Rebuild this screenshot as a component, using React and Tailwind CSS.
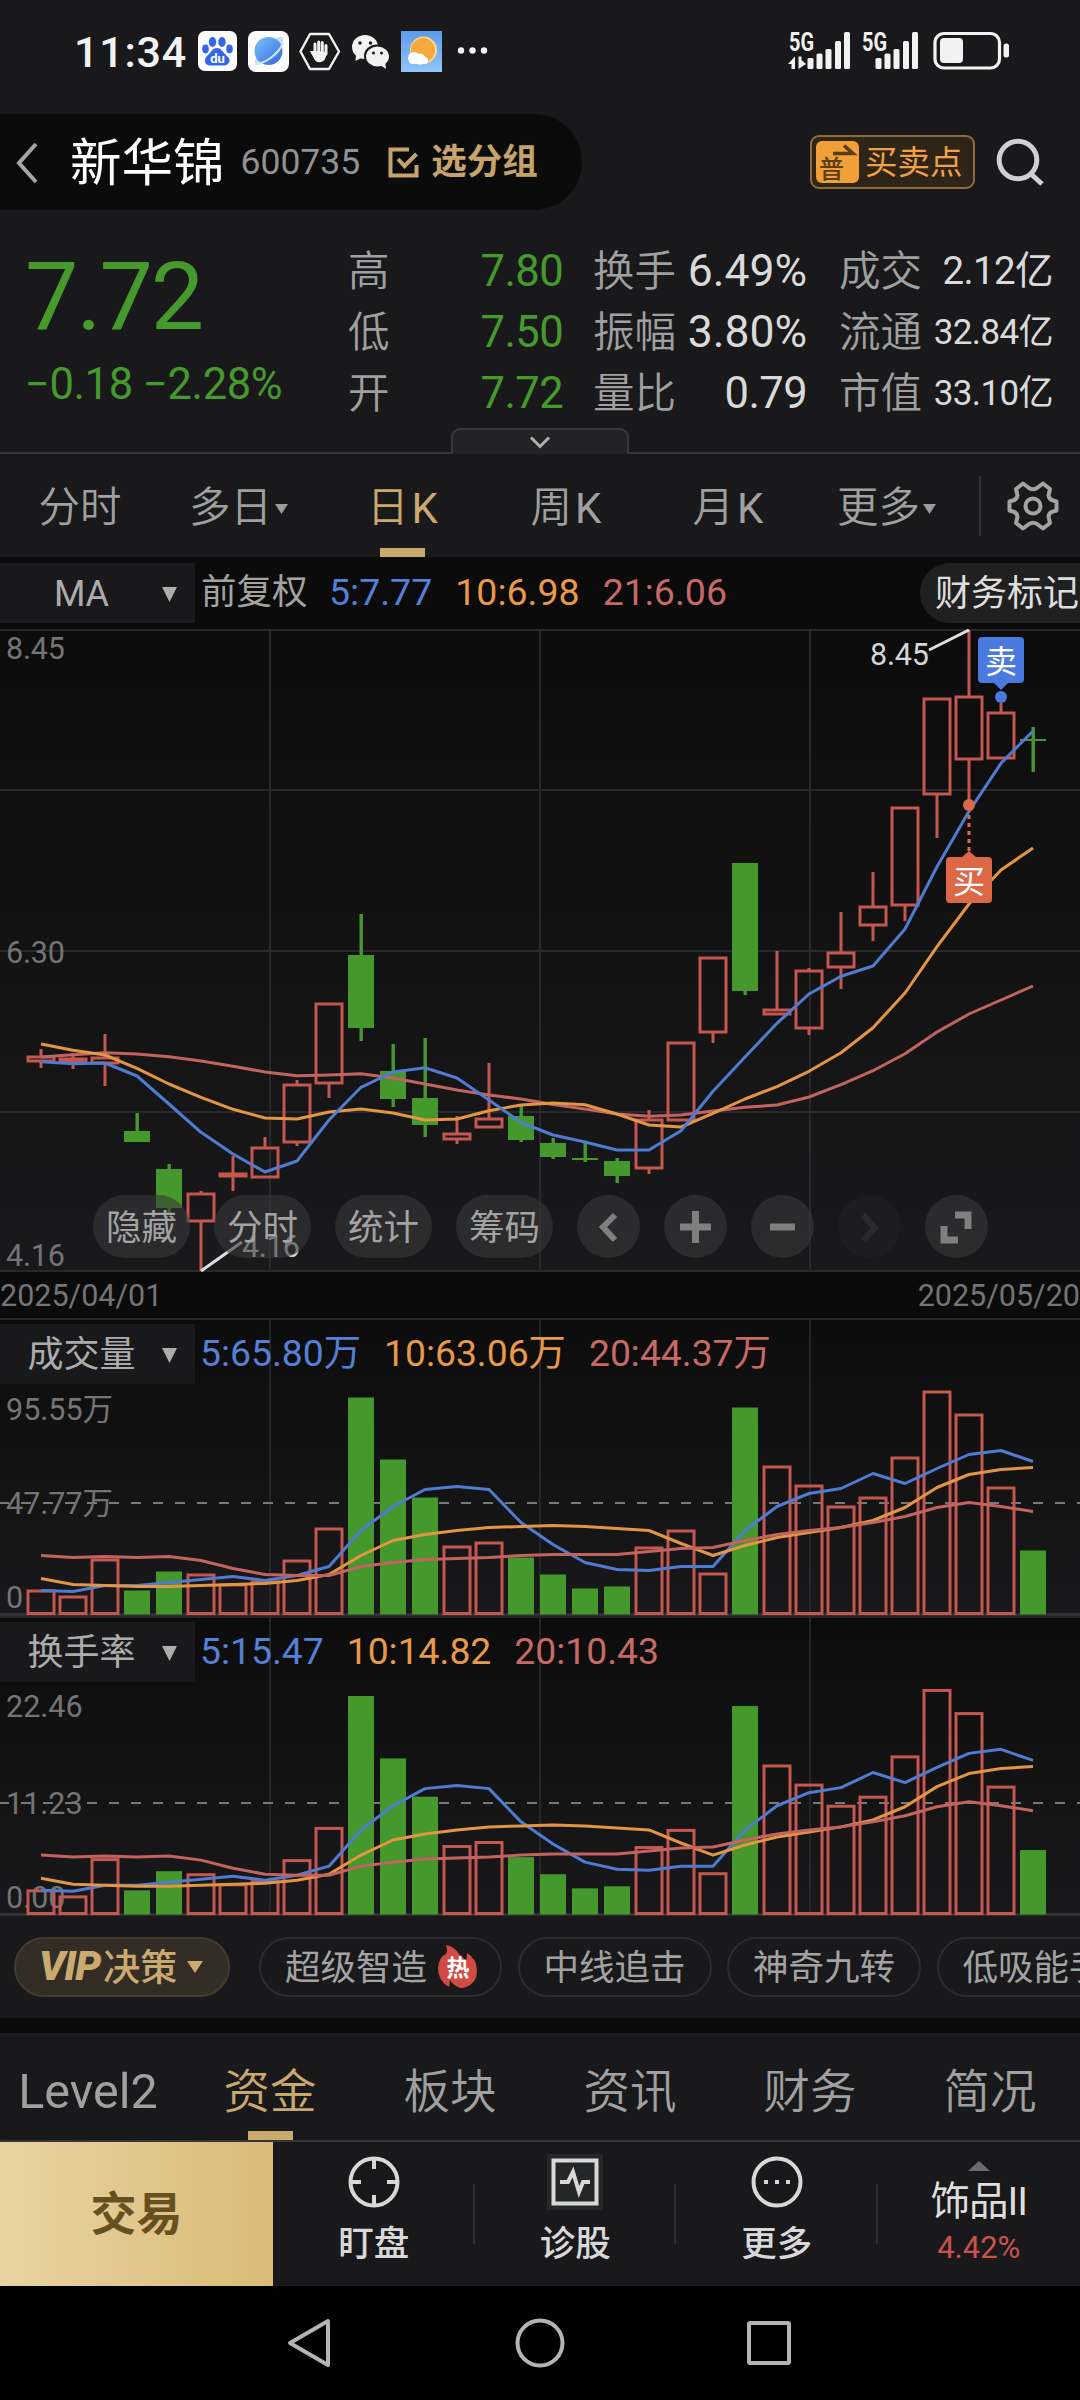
// src/App.jsx
import React from 'react';

const RED = '#c4574f';
const GREEN = '#44982c';
const BLUE = '#4f7bd0';
const ORANGE = '#e39544';
const ROSE = '#c26360';

const x = (i) => 41 + i * 32;

// [up, wick top, body top, body bottom, wick bottom]
const candles = [
  [1, 1049, 1057, 1061, 1068], [1, 1053, 1059, 1062, 1069], [1, 1034, 1058, 1063, 1086], [0, 1113, 1131, 1142, 1142],
  [0, 1164, 1169, 1208, 1214], [1, 1191, 1194, 1221, 1271], [1, 1156, 1174, 1176, 1191], [1, 1137, 1148, 1177, 1177],
  [1, 1080, 1085, 1142, 1146], [1, 1004, 1004, 1083, 1098], [0, 914, 955, 1028, 1041], [0, 1044, 1071, 1099, 1107],
  [0, 1038, 1098, 1125, 1137], [1, 1116, 1134, 1139, 1144], [1, 1063, 1119, 1127, 1127], [0, 1106, 1116, 1140, 1142],
  [0, 1138, 1143, 1157, 1159], [0, 1143, 1158, 1160, 1162], [0, 1158, 1161, 1176, 1183], [1, 1110, 1120, 1168, 1174],
  [1, 1043, 1043, 1120, 1120], [1, 958, 958, 1032, 1043], [0, 863, 863, 991, 995], [1, 951, 1010, 1014, 1014],
  [1, 968, 971, 1028, 1035], [1, 912, 953, 967, 989], [1, 872, 907, 925, 941], [1, 808, 808, 905, 921],
  [1, 699, 699, 794, 838], [1, 630, 697, 759, 803], [1, 703, 713, 758, 758], [0, 727, 739, 741, 772],
];

const ma5 = [1061.7, 1063.7, 1063, 1076, 1104, 1132.3, 1154, 1172, 1161, 1120, 1087.3, 1072, 1067.7, 1078, 1100, 1122.5, 1135, 1142, 1150, 1150, 1130.7, 1091.3, 1057, 1023.3, 994, 976.3, 966, 929, 866.7, 811.3, 763.3, 731];
const ma10 = [1044, 1050.3, 1055, 1068.3, 1084, 1097.3, 1109.3, 1118, 1119, 1112, 1109, 1113, 1120, 1119, 1110.7, 1105, 1103, 1104.7, 1114, 1125, 1127, 1113.3, 1099, 1086.7, 1071.3, 1052.7, 1027.7, 993, 946.7, 904, 870, 848];
const ma21 = [1057, 1054.7, 1052.7, 1054, 1056.7, 1061, 1066.3, 1072, 1075.7, 1075, 1073.7, 1078, 1084, 1090, 1095, 1099, 1104.5, 1109, 1114, 1116.3, 1115, 1111, 1107.3, 1105, 1097, 1084.7, 1070.7, 1053.7, 1032, 1014, 1000, 986];

// bar heights above the base line
const bars = [24, 18, 55, 24, 43, 40, 30, 33, 54, 86, 217, 155, 117, 68, 72, 57, 40, 26, 28, 67, 84, 41, 207, 148, 129, 108, 117, 157, 223, 200, 127, 64];
const avg5 = [24, 23, 29, 29, 32, 35, 38, 34, 39, 48, 84, 108, 125, 128, 125, 92, 70, 52, 45, 44, 48, 48, 84, 108, 121, 126, 141, 131, 146, 160, 164, 153];
const avg10 = [36, 30, 29, 28, 28, 29, 30, 31, 34, 40, 59, 74, 80, 84, 87, 88, 89, 88, 86, 84, 71, 59, 69, 77, 82, 87, 94, 107, 127, 140, 145, 147];
const avg20 = [59, 57, 58, 57, 58, 54, 46, 40, 39, 39, 48, 52, 55, 56, 57, 59, 60, 60, 60, 63, 66, 67, 74, 80, 84, 87, 92, 98, 107, 112, 108, 103];

const points = (list, fn) => list.map((v, i) => `${x(i)},${fn(v)}`).join(' ');

const Line = ({ list, fn, color }) => (
  <polyline points={points(list, fn)} fill="none" stroke={color} strokeWidth="3" strokeLinejoin="round" />
);

const PanelBg = ({ id, height }) => (
  <>
    <defs>
      <linearGradient id={id} x1="0" y1="0" x2="0" y2="1">
        <stop offset="0" stopColor="#0c0c0c" />
        <stop offset="1" stopColor="#19191b" />
      </linearGradient>
    </defs>
    <rect width="1080" height={height} fill={`url(#${id})`} />
  </>
);

const StatusBar = () => (
  <div className="flex h-[114px] items-start justify-between pt-[30px] pl-[74px] pr-[70px]">
    <div className="flex h-[42px] items-center">
      <span className="w-[124px] pt-[2px] text-[43px] leading-none font-medium tracking-[0.8px] text-[#f2f2f2]">11:34</span>
      <svg width="292" height="42" viewBox="0 0 292 42">
        <rect x="0" y="1" width="39" height="40" rx="7" fill="#fff" />
        <g fill="#3367e8">
          <ellipse cx="14.500" cy="12" rx="3.700" ry="5" />
          <ellipse cx="24" cy="12" rx="3.700" ry="5" />
          <ellipse cx="7.500" cy="19" rx="3.300" ry="4.400" />
          <ellipse cx="31.500" cy="19" rx="3.300" ry="4.400" />
          <path d="M19 18 C24 18 25 23 29 26 C34 30 31 35.500 26 35.500 L12 35.500 C7 35.500 5 30 9 26 C13 23 14 18 19 18Z" />
        </g>
        <text x="19.500" y="33" fill="#fff" fontSize="13" fontWeight="700" textAnchor="middle">du</text>
        <defs>
          <linearGradient id="planet" x1="0" y1="0" x2="1" y2="1">
            <stop offset="0" stopColor="#7fc4f8" />
            <stop offset="1" stopColor="#2f67e0" />
          </linearGradient>
          <linearGradient id="sky" x1="0" y1="0" x2="0" y2="1">
            <stop offset="0" stopColor="#5d9cec" />
            <stop offset="1" stopColor="#93c4f8" />
          </linearGradient>
        </defs>
        <rect x="50" y="1" width="41" height="41" rx="8" fill="#fff" />
        <ellipse cx="71" cy="21" rx="19" ry="6" transform="rotate(-45 71 21)" fill="#c3dcfa" />
        <circle cx="70.500" cy="21" r="14" fill="url(#planet)" />
        <path d="M57 34 C66 34 80 25 85 13" stroke="#d4e7fc" strokeWidth="2" fill="none" />
        <path d="M112 4 H131 L141 21.500 L131 39 H112 L102.500 21.500Z" fill="none" stroke="#f2f2f2" strokeWidth="2.400" strokeLinejoin="round" />
        <g stroke="#f2f2f2" strokeWidth="3" strokeLinecap="round" fill="#f2f2f2">
          <path d="M117 23 V14 M120.700 22 V12 M124.300 22 V12.500 M128 24 V15.500" />
          <path d="M113.500 22 L118 30 Q122 33 126 29 L128 23 L117 22Z" strokeWidth="2" />
        </g>
        <g fill="#f2f2f2">
          <ellipse cx="167" cy="17" rx="13" ry="12" />
          <path d="M158 25 L157.500 31 L165 27Z" />
        </g>
        <ellipse cx="179" cy="26" rx="13" ry="11.500" fill="#19191b" />
        <ellipse cx="179.500" cy="26.500" rx="11.500" ry="10" fill="#f2f2f2" />
        <path d="M182 35 L188 39 L187 31Z" fill="#f2f2f2" />
        <g fill="#19191b">
          <circle cx="162" cy="13" r="1.700" />
          <circle cx="172.500" cy="13" r="1.700" />
          <circle cx="175.500" cy="23" r="1.500" />
          <circle cx="183.500" cy="23" r="1.500" />
        </g>
        <rect x="203" y="1" width="41" height="41" fill="url(#sky)" />
        <circle cx="225.500" cy="20" r="13.500" fill="#ffd98a" />
        <circle cx="225" cy="20" r="12" fill="#f6a93c" />
        <circle cx="216" cy="28" r="6" fill="#fff" />
        <circle cx="222" cy="29" r="5.500" fill="#fff" />
        <rect x="211" y="27" width="19" height="7" rx="3.500" fill="#fff" />
        <g fill="#f2f2f2">
          <circle cx="263" cy="20.500" r="3.200" />
          <circle cx="274.500" cy="20.500" r="3.200" />
          <circle cx="286" cy="20.500" r="3.200" />
        </g>
      </svg>
    </div>
    <svg className="overflow-visible" width="222" height="42" viewBox="788 30 222 42" fill="#f2f2f2">
      <text x="789" y="50.500" fontSize="25" fontWeight="700" textLength="25" lengthAdjust="spacingAndGlyphs">5G</text>
      <text x="862" y="50.500" fontSize="25" fontWeight="700" textLength="25" lengthAdjust="spacingAndGlyphs">5G</text>
      <path d="M788 64 L795 56.500 V69 H791.500 V64Z M798.500 56.500 H801.500 V60 L806 64 L798.500 69Z" />
      <rect x="807.500" y="58" width="6" height="11" rx="1.500" />
      <rect x="816.500" y="53.500" width="6" height="15.500" rx="1.500" />
      <rect x="825.500" y="49" width="6" height="20" rx="1.500" />
      <rect x="835" y="41" width="6" height="28" rx="1.500" />
      <rect x="844" y="32" width="6" height="37" rx="1.500" />
      <rect x="875.500" y="58" width="6" height="11" rx="1.500" />
      <rect x="884.500" y="53.500" width="6" height="15.500" rx="1.500" />
      <rect x="893.500" y="49" width="6" height="20" rx="1.500" />
      <rect x="903" y="41" width="6" height="28" rx="1.500" />
      <rect x="912" y="32" width="6" height="37" rx="1.500" />
      <rect x="935" y="33.500" width="64.500" height="34.500" rx="9" fill="none" stroke="#f2f2f2" strokeWidth="3.200" />
      <rect x="940" y="38" width="23" height="25" rx="4" />
      <rect x="1003.500" y="43.500" width="5.500" height="14" rx="2.500" />
    </svg>
  </div>
);

const Header = () => (
  <div className="flex h-24 items-center justify-between pr-[36px]">
    <div className="flex h-24 w-[582px] items-center rounded-r-full bg-[#0b0b0b] pl-[14px]">
      <svg width="24" height="44" viewBox="0 0 24 44" fill="none" stroke="#a5a5a5" strokeWidth="4">
        <path d="M22 4 L5 23 L22 42" />
      </svg>
      <span className="ml-[32px] pt-[3px] text-[51.5px] leading-none text-white">新华锦</span>
      <span className="ml-[16px] pt-[2px] text-[35.5px] leading-none text-[#929292]">600735</span>
      <svg className="ml-[28px]" width="31" height="31" viewBox="0 0 31 31" fill="none" stroke="#c4a46c" strokeWidth="4">
        <path d="M21 2.500 H2.500 V28.500 H28.500 V18" />
        <path d="M10 12 L16.500 19 L28.500 7" />
      </svg>
      <span className="ml-[12px] pt-[2px] text-[35.5px] leading-none font-bold text-[#c4a46c]">选分组</span>
    </div>
    <div className="flex items-center gap-[21px]">
      <div className="flex h-[54px] w-[165px] items-center rounded-[9px] border-2 border-[#8f6b3c] bg-[#2e2417] pl-1">
        <svg className="overflow-visible" width="43" height="42" viewBox="0 0 43 42">
          <rect width="43" height="42" rx="6" fill="#f09f39" />
          <path d="M17 12.500 H37 L28 4.500" fill="none" stroke="#5a3d12" strokeWidth="3.500" />
          <text x="3" y="36.500" fontSize="25" fill="#5a3d12" fontWeight="500">普</text>
        </svg>
        <span className="ml-[6px] pt-[2px] text-[32.5px] leading-none text-[#f0a045]">买卖点</span>
      </div>
      <svg width="48" height="50" viewBox="0 0 48 50" fill="none" stroke="#cfd0d1" strokeWidth="5">
        <circle cx="22" cy="23" r="18.800" />
        <path d="M35 37 L46 47" />
      </svg>
    </div>
  </div>
);

const stats = [
  [
    ['高', '7.80'],
    ['低', '7.50'],
    ['开', '7.72'],
  ],
  [
    ['换手', '6.49%'],
    ['振幅', '3.80%'],
    ['量比', '0.79'],
  ],
  [
    ['成交', '2.12亿'],
    ['流通', '32.84亿'],
    ['市值', '33.10亿'],
  ],
];

const colClass = ['ml-0 w-[215px]', 'ml-[30px] w-[214px]', 'ml-[32px] w-[214px]'];
const valueClass = [
  ['text-[43.5px] tracking-[-0.6px] text-[#469a2d]', 'text-[43.5px] tracking-[-0.6px] text-[#469a2d]', 'text-[43.5px] tracking-[-0.6px] text-[#469a2d]'],
  ['text-[44.5px] text-[#dadada]', 'text-[44.5px] text-[#dadada]', 'text-[43.5px] tracking-[-0.6px] text-[#dadada]'],
  ['text-[38.5px] tracking-[-0.6px] text-[#dadada]', 'text-[35px] tracking-[-0.6px] text-[#dadada]', 'text-[35px] tracking-[-0.6px] text-[#dadada]'],
];

const Quote = () => (
  <div className="relative flex h-[244px] border-b-2 border-[#363638]">
    <div className="w-[348px] pl-[25px]">
      <div className="mt-[40px] text-[95px] leading-[94px] tracking-[-2px] text-[#469a2d]">7.72</div>
      <div className="mt-[18px] text-[43.5px] leading-[46px] tracking-[-0.4px] text-[#469a2d]">−0.18 −2.28%</div>
    </div>
    {stats.map((col, c) => (
      <div key={c} className={`pt-[31px] ${colClass[c]}`}>
        {col.map(([label, value], r) => (
          <div key={label} className="flex h-[61px] items-center justify-between leading-none">
            <span className="text-[41.5px] font-[350] text-[#a0a0a0]">{label}</span>
            <span className={valueClass[c][r]}>{value}</span>
          </div>
        ))}
      </div>
    ))}
    <div className="absolute top-[218px] left-[451px] flex h-[26px] w-[178px] items-center justify-center rounded-t-[9px] border-2 border-b-0 border-[#38383a] bg-[#232325]">
      <svg width="22" height="13" viewBox="0 0 22 13" fill="none" stroke="#b0b0b0" strokeWidth="3">
        <path d="M2 1.500 L11 10.500 L20 1.500" />
      </svg>
    </div>
  </div>
);

const periods = [
  ['分时', 'w-[160px]', false],
  ['多日', 'w-[157px]', true],
  ['日K', 'w-[171px]', false],
  ['周K', 'w-[156px]', false],
  ['月K', 'w-[168px]', false],
  ['更多', 'w-[149px]', true],
];

const Periods = () => (
  <div className="flex h-[103px] items-center">
    {periods.map(([name, width, menu]) => (
      <div key={name} className={`relative flex h-full items-center justify-center pt-[6px] text-[41.5px] font-[350] ${width} ${name === '日K' ? 'text-[#c9a96e]' : 'text-[#a0a0a0]'}`}>
        <span>{name.replace('K', '')}</span>
        {name.endsWith('K') && <span className="ml-[3px] text-[42px] font-normal">K</span>}
        {menu && (
          <svg className="ml-[3px]" width="13" height="10" viewBox="0 0 13 10" fill="#9c9c9c">
            <path d="M0 0 H13 L6.500 10Z" />
          </svg>
        )}
        {name === '日K' && <div className="absolute bottom-0 h-[9px] w-[45px] bg-[#c9a96e]" />}
      </div>
    ))}
    <div className="ml-[18px] h-[60px] w-[2px] bg-[#343436]" />
    <svg className="ml-[26px]" width="52" height="52" viewBox="0 0 52 52" fill="none" stroke="#a3a3a3" strokeWidth="4" strokeLinejoin="round">
      <path d="M16 3.500 L22 8 Q26 10.500 30 8 L36 3.500 L43 9 L41.500 15.500 Q42 19.500 46 20.500 L49.500 21.500 V30.500 L46 31.500 Q42 32.500 41.500 36.500 L43 43 L36 48.500 L30 44 Q26 41.500 22 44 L16 48.500 L9 43 L10.500 36.500 Q10 32.500 6 31.500 L2.500 30.500 V21.500 L6 20.500 Q10 19.500 10.500 15.500 L9 9Z" />
      <circle cx="26" cy="26" r="7.500" />
    </svg>
  </div>
);

const Picker = ({ name }) => (
  <div className="relative flex h-[60px] w-[195px] shrink-0 items-center bg-[#19191b] pt-[2px] text-[36px] text-[#acacac]">
    <span className="w-[163px] text-center">{name}</span>
    <svg className="absolute left-[162px]" width="15" height="15" viewBox="0 0 15 15" fill="#acacac">
      <path d="M0 0 H15 L7.500 15Z" />
    </svg>
  </div>
);

const Values = ({ list }) => (
  <>
    <span className="text-[#5580d6]">{list[0]}</span>
    <span className="text-[#e8994a]">{list[1]}</span>
    <span className="text-[#c76966]">{list[2]}</span>
  </>
);

const KLine = () => (
  <div className="relative h-[643px]">
    <svg className="block" width="1080" height="643" viewBox="0 629 1080 643">
      <g transform="translate(0 629)">
        <PanelBg id="bg-k" height="643" />
      </g>
      <path d="M0 630 H1080 M0 790 H1080 M0 951 H1080 M0 1112 H1080 M0 1271 H1080 M270 629 V1272 M540 629 V1272 M810 629 V1272" stroke="#29292b" strokeWidth="2" />
      {candles.map(([up, wt, bt, bb, wb], i) =>
        up ? (
          <g key={i} fill="none" stroke={RED} strokeWidth="3">
            <path d={`M${x(i)} ${wt} V${bt} M${x(i)} ${bb} V${wb}`} />
            <rect x={x(i) - 13} y={bt} width="26" height={bb - bt} />
          </g>
        ) : (
          <g key={i} fill={GREEN}>
            <rect x={x(i) - 1.5} y={wt} width="3.4" height={wb - wt} />
            <rect x={x(i) - 13} y={bt} width="26" height={bb - bt} />
          </g>
        )
      )}
      <Line list={ma21} fn={(v) => v} color={ROSE} />
      <Line list={ma10} fn={(v) => v} color={ORANGE} />
      <Line list={ma5} fn={(v) => v} color={BLUE} />
      <g fontSize="30.500" fill="#747476">
        <text x="6" y="659" textLength="59">8.45</text>
        <text x="6" y="962.500" textLength="59">6.30</text>
        <text x="6" y="1265.500" textLength="59">4.16</text>
      </g>
      <g fontSize="30.500" fill="#d6d6d6">
        <text x="870" y="665" textLength="59">8.45</text>
        <text x="242" y="1257" textLength="58">4.16</text>
      </g>
      <path d="M929 650 L969 630 M201 1271 L242 1242" stroke="#dedede" strokeWidth="3" />
      {/* sell mark */}
      <path d="M994 683 L1001 690 L1008 683Z" fill="#4a79e0" />
      <rect x="978" y="637" width="46" height="46" rx="4" fill="#4a79e0" />
      <circle cx="1001" cy="697" r="6" fill="#4a79e0" />
      <text x="1001" y="672.500" fontSize="32" fill="#fff" textAnchor="middle">卖</text>
      {/* buy mark */}
      <circle cx="969" cy="805" r="6" fill="#dd6848" />
      <path d="M969 815 V852" stroke="#dd6848" strokeWidth="3" strokeDasharray="4 4" />
      <path d="M962 857 L969 851 L976 857Z" fill="#dd6848" />
      <rect x="946" y="857" width="46" height="46" rx="4" fill="#dd6848" />
      <text x="969" y="892.500" fontSize="32" fill="#fff" textAnchor="middle">买</text>
    </svg>
    <div className="absolute top-[566px] left-[93px] flex gap-6">
      {['隐藏', '分时', '统计', '筹码'].map((name) => (
        <div key={name} className="flex h-[63px] w-[97px] items-center justify-center rounded-full bg-[#38383a]/60 pt-[4px] text-[35.5px] text-[#a3a3a3]">
          {name}
        </div>
      ))}
      {['M38 20 L26 32 L38 45', 'M16 32 H47 M31.500 16 V48', 'M19 32 H44', 'M25 20 L37 33 L25 45', 'M30 20 H43 V34 M19 31 V45 H33'].map((d, i) => (
        <svg key={d} className={`rounded-full ${i === 3 ? 'bg-[#1d1d1f]' : 'bg-[#38383a]/60'}`} width="63" height="63" viewBox="0 0 63 63" fill="none" stroke={i === 3 ? '#2a2a2c' : '#7f7f80'} strokeWidth={i === 0 || i === 3 ? 6 : 7}>
          <path d={d} />
        </svg>
      ))}
    </div>
  </div>
);

const BarPanel = ({ id, name, values, labels, height, scale }) => {
  const base = height - 1.5;
  const y = (v) => base - v * scale;
  return (
    <div className="relative" style={{ height }}>
      <svg className="block" width="1080" height={height}>
        <PanelBg id={id} height={height} />
        <path d={`M270 0 V${height} M540 0 V${height} M810 0 V${height} M0 1 H1080`} stroke="#262628" strokeWidth="2" />
        <path d={`M0 ${height - 1.5} H1080`} stroke="#303032" strokeWidth="3" />
        <path d={`M-1 ${height - 113} H1080`} stroke="#79797b" strokeWidth="2" strokeDasharray="10 12" />
        <g fontSize="30.500" fill="#747476">
          <text x="6" y={height === 300 ? 101 : 102}>{labels[0]}</text>
          <text x="6" y={height - 102}>{labels[1]}</text>
          <text x="6" y={height - 8}>{labels[2]}</text>
        </g>
        {bars.map((v, i) =>
          candles[i][0] ? (
            <rect key={i} x={x(i) - 13} y={y(v) + 0.5} width="26" height={v * scale - 1.5} fill="none" stroke={RED} strokeWidth="3" />
          ) : (
            <rect key={i} x={x(i) - 13} y={y(v)} width="26" height={v * scale} fill={GREEN} />
          )
        )}
        <Line list={avg5} fn={y} color={BLUE} />
        <Line list={avg10} fn={y} color={ORANGE} />
        <Line list={avg20} fn={y} color={ROSE} />
      </svg>
      <div className="absolute top-[6px] left-0 flex h-[60px] items-center text-[37.3px]">
        <Picker name={name} />
        <div className="ml-[5px] flex gap-[23px] leading-none">
          <Values list={values} />
        </div>
      </div>
    </div>
  );
};

const Strategies = () => (
  <div className="flex h-[102px] items-start overflow-hidden pt-[21px] pl-[14px] text-[35.5px] whitespace-nowrap text-[#a3a3a3]">
    <div className="flex h-[60px] w-[216px] shrink-0 items-center rounded-full border-2 border-[#453b2c] bg-[#332d26] pl-[23px] text-[37px] font-medium text-[#c9aa70]">
      <span className="text-[41px] font-black tracking-[-1px] italic">VIP</span>
      <span className="ml-[3px] pt-[4px]">决策</span>
      <svg className="ml-[10px]" width="16" height="12" viewBox="0 0 16 12" fill="#c9aa70">
        <path d="M0 0 H16 L8 12Z" />
      </svg>
    </div>
    <div className="ml-[29px] flex h-[60px] w-[243px] shrink-0 items-center rounded-full border-2 border-[#2c2c2e] pl-[24px]">
      <span className="pt-[4px]">超级智造</span>
      <svg className="ml-[10px]" width="41" height="44" viewBox="0 0 41 44">
        <path d="M9 0 Q18 2 22 9 Q26 12 29 16 Q30 12 30 8 Q40 14 40 26 Q40 38 29 42 Q24 44 21 42 Q15 39 13 35 L12 42 Q1 36 1 23 Q2 12 9 9 Q11 5 9 0Z" fill="#cf4b43" />
        <text x="21" y="31" fontSize="23" fontWeight="700" fill="#fff" textAnchor="middle">热</text>
      </svg>
    </div>
    {['中线追击', '神奇九转', '低吸能手'].map((name) => (
      <div key={name} className="ml-[15.5px] flex h-[60px] w-[194px] shrink-0 items-center justify-center rounded-full border-2 border-[#2c2c2e] pt-[4px]">
        {name}
      </div>
    ))}
  </div>
);

const Sections = () => (
  <div className="flex h-[109px] border-b-2 border-[#363638]">
    {['Level2', '资金', '板块', '资讯', '财务', '简况'].map((name) => (
      <div key={name} className={`relative flex w-[180px] justify-center pt-[26px] text-[46.5px] leading-[66px] font-[350] ${name === '资金' ? 'text-[#c9a96e]' : 'text-[#a0a0a0]'}`}>
        <span className={name === 'Level2' ? '-ml-1 text-[48.5px] font-normal' : ''}>{name}</span>
        {name === '资金' && <div className="absolute bottom-0 h-[9px] w-[45px] bg-[#c9a96e]" />}
      </div>
    ))}
  </div>
);

const actions = [
  ['盯盘', <><circle cx="28" cy="28" r="23.500" /><path d="M28 4 V15 M28 41 V52 M4 28 H15 M41 28 H52" /></>],
  ['诊股', <><rect x="0" y="0" width="56" height="56" fill="#252627" stroke="none" /><rect x="6.500" y="6.500" width="43" height="43" /><path d="M13 28 H21 L26 18 L32 38 L36 28 H43" /></>],
  ['更多', <><circle cx="28" cy="28" r="23.500" /><path d="M15 28 H19 M26 28 H30 M37 28 H41" /></>],
];

const BottomBar = () => (
  <div className="flex h-[144px] items-center">
    <div className="flex h-full w-[273px] items-center justify-center bg-linear-to-r from-[#e8d3a2] to-[#dabb76] text-[46px] font-bold text-[#67501f]">交易</div>
    {actions.map(([name, icon]) => (
      <div key={name} className="relative flex h-full w-[201.5px] flex-col items-center pt-[12px]">
        <svg width="56" height="56" viewBox="0 0 56 56" fill="none" stroke="#d8d8d8" strokeWidth="4">
          {icon}
        </svg>
        <span className="mt-[16px] text-[35.5px] leading-[36px] font-medium text-[#d8d8d8]">{name}</span>
        <div className="absolute top-[42px] right-0 h-[60px] w-[2px] bg-[#303032]" />
      </div>
    ))}
    <div className="flex h-full flex-1 flex-col items-center pt-[19px]">
      <svg width="22" height="10" viewBox="0 0 22 10" fill="#6b6b6d">
        <path d="M11 0 L22 10 H0Z" />
      </svg>
      <span className="mt-[10px] text-[39.5px] leading-[42px] tracking-[-1px] text-[#dedede]">饰品II</span>
      <span className="mt-[10px] text-[31px] leading-[30px] text-[#c9534c]">4.42%</span>
    </div>
  </div>
);

const NavBar = () => (
  <div className="h-[114px] bg-black">
    <svg width="1080" height="114" viewBox="0 0 1080 114" fill="none" stroke="#b4b4b4" strokeWidth="4" strokeLinejoin="round">
      <path d="M328 35 L290 57 L328 79Z" />
      <circle cx="540" cy="57" r="22.500" />
      <rect x="749" y="37" width="40" height="40" rx="1" />
    </svg>
  </div>
);

const App = () => {
  return (
    <div className="w-[1080px] overflow-hidden bg-[#19191b] font-['Roboto','Noto_Sans_CJK_SC',sans-serif]">
      <StatusBar />
      <Header />
      <Quote />
      <Periods />
      <div className="flex h-[72px] items-center overflow-hidden bg-[#0b0b0b] text-[37.5px] leading-none whitespace-nowrap">
        <Picker name="MA" />
        <span className="ml-[6px] w-[107px] shrink-0 text-[35.5px] text-[#a3a3a3]">前复权</span>
        <div className="ml-[21px] flex w-[591px] shrink-0 gap-[23px]">
          <Values list={['5:7.77', '10:6.98', '21:6.06']} />
        </div>
        <div className="flex h-[60px] w-[180px] shrink-0 items-center rounded-l-full bg-[#202021] pt-[2px] pl-[15px] text-[36px] text-[#dedede]">财务标记</div>
      </div>
      <KLine />
      <div className="flex h-[46px] items-center justify-between bg-[#0b0b0b] pt-[2px] text-[30.5px] text-[#747476]">
        <span>2025/04/01</span>
        <span>2025/05/20</span>
      </div>
      <BarPanel id="bg-vol" name="成交量" values={['5:65.80万', '10:63.06万', '20:44.37万']} labels={['95.55万', '47.77万', '0']} height={298} scale={1} />
      <BarPanel id="bg-turn" name="换手率" values={['5:15.47', '10:14.82', '20:10.43']} labels={['22.46', '11.23', '0.00']} height={300} scale={1.007} />
      <Strategies />
      <div className="h-[15px] bg-[#0b0b0b]" />
      <Sections />
      <BottomBar />
      <NavBar />
    </div>
  );
};

export default App;
